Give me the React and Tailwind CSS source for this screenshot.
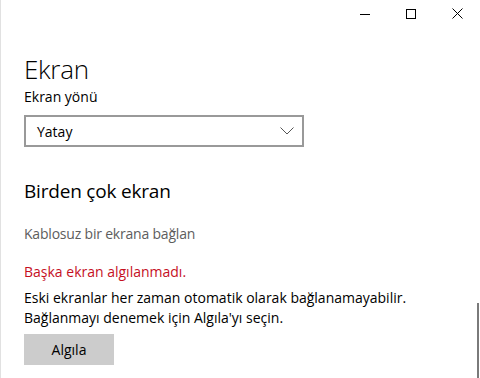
import React from "react";

const font = { fontFamily: '"Open Sans", "Noto Sans", sans-serif' };

export default function App() {
  return (
    <div
      className="relative w-[480px] h-[378px] overflow-hidden bg-white border-l border-[#e1e1e1] text-black"
      style={font}
    >
      {/* title bar */}
      <div className="flex justify-end h-[27px]">
        <div className="w-[46px] flex items-center justify-center">
          <svg width="10" height="10" viewBox="0 0 10 10">
            <path d="M0 5.5H10" stroke="#000" strokeWidth="1" />
          </svg>
        </div>
        <div className="w-[46px] flex items-center justify-center">
          <svg width="10" height="10" viewBox="0 0 10 10">
            <rect x="0.5" y="0.5" width="9" height="9" fill="none" stroke="#000" strokeWidth="1" />
          </svg>
        </div>
        <div className="w-[46px] flex items-center justify-center">
          <svg width="11" height="11" viewBox="0 0 11 11">
            <path d="M0.5 0.5L10.5 10.5M10.5 0.5L0.5 10.5" stroke="#000" strokeWidth="1" />
          </svg>
        </div>
      </div>

      <div className="pl-[23px]">
        <h1 className="mt-[26px] text-[26px] font-light leading-[32px] tracking-[-0.3px]">Ekran</h1>
        <div className="mt-[2px] text-[14px] leading-[20px]">Ekran yönü</div>
        <div className="mt-[8px] w-[280px] h-[32px] border-2 border-[#999999] flex items-center justify-between pl-[11px] pr-[8px] text-[14px]">
          <span>Yatay</span>
          <svg width="14" height="8" viewBox="0 0 14 8">
            <path d="M0.5 0.5L7 7L13.5 0.5" fill="none" stroke="#555" strokeWidth="1" />
          </svg>
        </div>

        <h2 className="mt-[30px] text-[19px] leading-[28px] tracking-[-0.2px]">Birden çok ekran</h2>
        <div className="mt-[19px] text-[14px] leading-[20px] text-[#5d5d5d] tracking-[-0.2px]">Kablosuz bir ekrana bağlan</div>
        <div className="mt-[18px] text-[14px] leading-[20px] text-[#c50f1f]">Başka ekran algılanmadı.</div>
        <div className="mt-[6px] text-[14px] leading-[20px]">
          <div>Eski ekranlar her zaman otomatik olarak bağlanamayabilir.</div>
          <div>Bağlanmayı denemek için Algıla'yı seçin.</div>
        </div>
        <button className="mt-[6px] w-[90px] h-[31px] bg-[#cccccc] text-[14px] flex items-center justify-center">
          Algıla
        </button>
      </div>

      <div className="absolute left-[476px] top-[303px] w-[2px] h-[80px] bg-[#7a7a7a]" />
    </div>
  );
}
